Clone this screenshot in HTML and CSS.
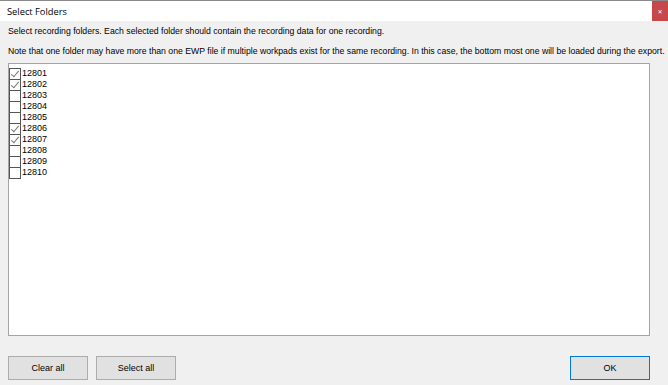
FILE: index.html
```html
<!DOCTYPE html>
<html lang="en">
<head>
  <meta charset="UTF-8">
  <title>Select Folders</title>
  <link rel="stylesheet" href="styles.css">
</head>
<body>
  <div class="window">
    <header class="titlebar">
      <span class="title">Select Folders</span>
      <button class="close-btn">&#x2715;</button>
    </header>
    <main class="content">
      <p class="info">Select recording folders. Each selected folder should contain the recording data for one recording.</p>
      <p class="info">Note that one folder may have more than one EWP file if multiple workpads exist for the same recording. In this case, the bottom most one will be loaded during the export.</p>
      <div class="list-box">
        <label class="item"><span class="check checked"></span>12801</label>
        <label class="item"><span class="check checked"></span>12802</label>
        <label class="item"><span class="check"></span>12803</label>
        <label class="item"><span class="check"></span>12804</label>
        <label class="item"><span class="check"></span>12805</label>
        <label class="item"><span class="check checked"></span>12806</label>
        <label class="item"><span class="check checked"></span>12807</label>
        <label class="item"><span class="check"></span>12808</label>
        <label class="item"><span class="check"></span>12809</label>
        <label class="item"><span class="check"></span>12810</label>
      </div>
      <div class="actions">
        <button class="btn">Clear all</button>
        <button class="btn">Select all</button>
        <button class="btn ok">OK</button>
      </div>
    </main>
  </div>
</body>
</html>
```

FILE: styles.css
```css
body {
  margin: 0;
  font-family: 'Liberation Sans', Arial, sans-serif;
  font-size: 8.7px;
  color: #000;
  background: #f0f0f0;
}
.window {
  height: 385px;
  display: flex;
  flex-direction: column;
  border-top: 1px solid #8a8a8a;
  box-sizing: border-box;
}
.titlebar {
  background: #fff;
  height: 20px;
  display: flex;
  align-items: center;
  justify-content: space-between;
  flex-shrink: 0;
}
.title {
  font-family: 'Open Sans', 'Liberation Sans', sans-serif;
  font-size: 9.3px;
  margin-left: 7px;
  color: #000;
}
.close-btn {
  width: 16px;
  height: 20px;
  border: none;
  background: #c7484a;
  color: #fff;
  font-size: 6px;
  padding: 0;
  font-family: 'DejaVu Sans', sans-serif;
}
.content {
  flex: 1;
  padding: 0 18px 0 8px;
  display: flex;
  flex-direction: column;
}
.info {
  margin: 4px 0 0 0;
  line-height: 12px;
  height: 12px;
  white-space: nowrap;
}
.info + .info {
  margin-top: 8px;
}
.list-box {
  margin-top: 6px;
  height: 273px;
  background: #fff;
  border: 1px solid #a5a5a5;
  padding-top: 4px;
  box-sizing: border-box;
  font-size: 9px;
}
.item {
  display: flex;
  align-items: center;
  height: 11px;
  line-height: 11px;
}
.check {
  width: 12px;
  height: 12px;
  border: 1px solid #555;
  box-sizing: border-box;
  margin-right: 1px;
  margin-bottom: -1px;
  position: relative;
  background: #fff;
}
.check.checked:after {
  content: "";
  position: absolute;
  left: 3px;
  top: 0;
  width: 3px;
  height: 7px;
  border-right: 1px solid #777;
  border-bottom: 1px solid #777;
  transform: rotate(40deg);
}
.actions {
  display: flex;
  gap: 8px;
  margin-top: 20px;
}
.btn {
  width: 80px;
  height: 24px;
  background: #e1e1e1;
  border: 1px solid #adadad;
  font-family: inherit;
  font-size: 9px;
  color: #000;
  padding: 0;
}
.btn.ok {
  margin-left: auto;
  border-color: #0078d7;
}
```
